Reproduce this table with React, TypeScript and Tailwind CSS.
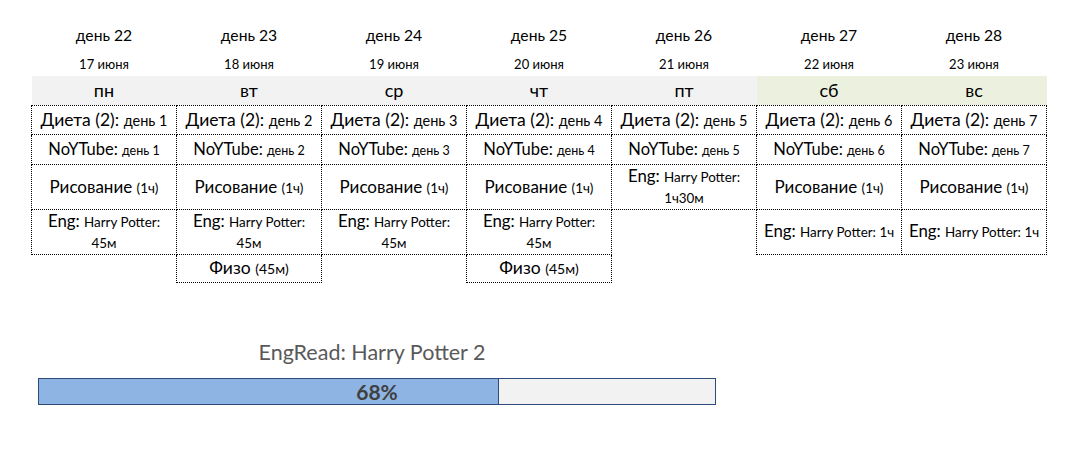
import React from "react";

const days = [
  { n: 22, date: "17 июня", wd: "пн" },
  { n: 23, date: "18 июня", wd: "вт" },
  { n: 24, date: "19 июня", wd: "ср" },
  { n: 25, date: "20 июня", wd: "чт" },
  { n: 26, date: "21 июня", wd: "пт" },
  { n: 27, date: "22 июня", wd: "сб" },
  { n: 28, date: "23 июня", wd: "вс" },
];

const cellBorder = "border border-dotted border-black text-center whitespace-nowrap align-middle leading-none";

function Diet({ d }: { d: number }) {
  return (
    <td className={cellBorder}>
      <span className="text-[17.5px]">Диета (2): </span>
      <span className="text-[14.5px]">день {d}</span>
    </td>
  );
}

function NoYT({ d }: { d: number }) {
  return (
    <td className={cellBorder}>
      <span className="text-[16.5px]">NoYTube: </span>
      <span className="text-[12.5px]">день {d}</span>
    </td>
  );
}

function Draw() {
  return (
    <td className={cellBorder}>
      <span className="text-[17px]">Рисование </span>
      <span className="text-[13.5px]">(1ч)</span>
    </td>
  );
}

function Eng({ rest, wrap }: { rest: string; wrap?: string }) {
  return (
    <td className={cellBorder}>
      <div className="leading-[22px]">
        <span className="text-[16.8px]">Eng: </span>
        <span className="text-[13.4px]">{rest}</span>
      </div>
      {wrap && <div className="text-[13.4px] leading-[21px]">{wrap}</div>}
    </td>
  );
}

function Fizo() {
  return (
    <td className={cellBorder}>
      <span className="text-[17.5px]">Физо </span>
      <span className="text-[14px]">(45м)</span>
    </td>
  );
}

const Empty = () => <td />;

export default function App() {
  const pct = 68;
  return (
    <div className="w-[1092px] h-[453px] bg-white text-black font-['Lato','Noto_Sans',sans-serif] pt-[22px]">
      <table className="ml-[31px] border-collapse table-fixed w-[1015px]">
        <colgroup>
          {days.map((d) => (
            <col key={d.n} className="w-[145px]" />
          ))}
        </colgroup>
        <tbody>
          <tr className="h-[29px]">
            {days.map((d) => (
              <td key={d.n} className="text-center text-[15.7px] leading-none align-middle pb-[2px]">
                день {d.n}
              </td>
            ))}
          </tr>
          <tr className="h-[25px]">
            {days.map((d) => (
              <td key={d.n} className="text-center text-[13px] leading-none align-middle pt-[1px]">
                {d.date}
              </td>
            ))}
          </tr>
          <tr className="h-[29px]">
            {days.map((d, i) => (
              <td
                key={d.n}
                className={`text-center text-[18px] leading-none align-middle ${i >= 5 ? "bg-[#ebf1de]" : "bg-[#f2f2f2]"}`}
              >
                {d.wd}
              </td>
            ))}
          </tr>
          <tr className="h-[29px]">
            {[1, 2, 3, 4, 5, 6, 7].map((d) => (
              <Diet key={d} d={d} />
            ))}
          </tr>
          <tr className="h-[30px]">
            {[1, 2, 3, 4, 5, 6, 7].map((d) => (
              <NoYT key={d} d={d} />
            ))}
          </tr>
          <tr className="h-[45px]">
            <Draw />
            <Draw />
            <Draw />
            <Draw />
            <Eng rest="Harry Potter:" wrap="1ч30м" />
            <Draw />
            <Draw />
          </tr>
          <tr className="h-[45px]">
            <Eng rest="Harry Potter:" wrap="45м" />
            <Eng rest="Harry Potter:" wrap="45м" />
            <Eng rest="Harry Potter:" wrap="45м" />
            <Eng rest="Harry Potter:" wrap="45м" />
            <Empty />
            <Eng rest="Harry Potter: 1ч" />
            <Eng rest="Harry Potter: 1ч" />
          </tr>
          <tr className="h-[28px]">
            <Empty />
            <Fizo />
            <Empty />
            <Fizo />
            <Empty />
            <Empty />
            <Empty />
          </tr>
        </tbody>
      </table>

      <div className="ml-[38px] w-[678px] mt-[57px]">
        <div className="text-center pr-[10px] text-[21.5px] text-[#595959] leading-[24px]">
          EngRead: Harry Potter 2
        </div>
        <div className="relative mt-[14px] h-[27px] border border-[#2f4b7c] bg-[#f2f2f2] flex">
          <div
            className="h-full bg-[#8eb4e3] border-r border-[#2f4b7c]"
            style={{ width: `${pct}%` }}
          />
          <div className="absolute inset-0 flex items-center justify-center text-[21px] font-bold text-[#404040] leading-none">
            {pct}%
          </div>
        </div>
      </div>
    </div>
  );
}
